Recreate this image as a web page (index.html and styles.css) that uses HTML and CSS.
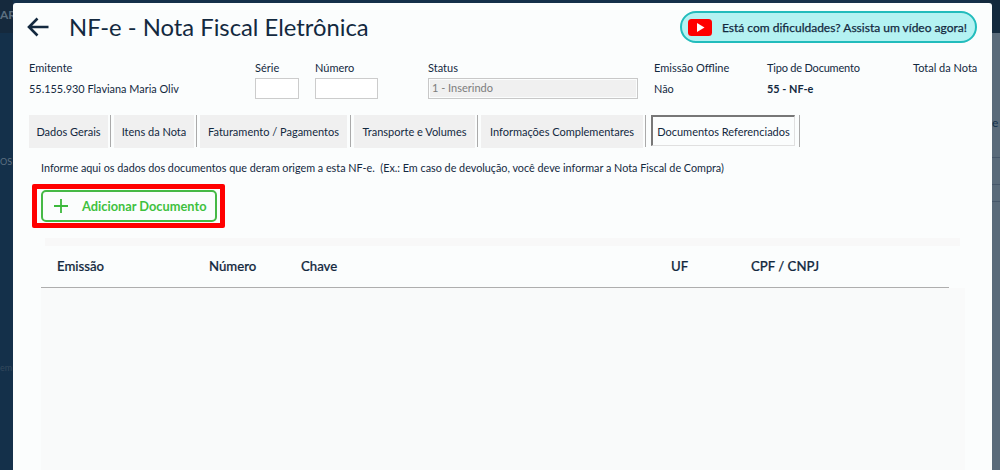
FILE: index.html
```html
<!DOCTYPE html>
<html lang="pt-BR">
<head>
<meta charset="utf-8">
<title>NF-e</title>
<link rel="stylesheet" href="styles.css">
</head>
<body>
<div class="backdrop-left">
  <span class="bg-text bg-ar">AR</span>
  <span class="bg-text bg-os">OS</span>
  <span class="bg-text bg-em">em</span>
</div>
<div class="backdrop-right">
  <span class="bg-text bg-e">e</span>
  <i class="bg-line l1"></i><i class="bg-line l2"></i><i class="bg-line l3"></i>
</div>
<main class="modal">
  <header class="top">
    <div class="title-wrap">
      <svg class="back" width="22" height="20" viewBox="0 0 22 20"><path d="M21.500 10H2.500M10.500 1.500L2 10l8.500 8.500" fill="none" stroke="#13293f" stroke-width="2.600"/></svg>
      <h1>NF-e - Nota Fiscal Eletrônica</h1>
    </div>
    <a class="video">
      <svg width="24" height="17" viewBox="0 0 24 17"><rect width="24" height="17" rx="3.500" fill="#f00"/><path d="M9 4v9l7.500-4.500z" fill="#fff"/></svg>
      <span>Está com dificuldades? Assista um vídeo agora!</span>
    </a>
  </header>

  <section class="fields">
    <div class="f f-emit"><label>Emitente</label><div class="val">55.155.930 Flaviana Maria Oliv</div></div>
    <div class="f f-serie"><label>Série</label><div class="box"></div></div>
    <div class="f f-num"><label>Número</label><div class="box"></div></div>
    <div class="f f-status"><label>Status</label><div class="box disabled">1 - Inserindo</div></div>
    <div class="f f-off"><label>Emissão Offline</label><div class="val">Não</div></div>
    <div class="f f-tipo"><label>Tipo de Documento</label><div class="val">55 - NF-e</div></div>
    <div class="f f-total"><label>Total da Nota</label></div>
  </section>

  <nav class="tabs">
    <a class="tab t1">Dados Gerais</a>
    <a class="tab t2">Itens da Nota</a>
    <a class="tab t3">Faturamento / Pagamentos</a>
    <a class="tab t4">Transporte e Volumes</a>
    <a class="tab t5">Informações Complementares</a>
    <a class="tab active">Documentos Referenciados</a>
  </nav>

  <p class="hint">Informe aqui os dados dos documentos que deram origem a esta NF-e.&nbsp; (Ex.: Em caso de devolução, você deve informar a Nota Fiscal de Compra)</p>

  <div class="highlight">
    <button class="add">
      <svg width="16" height="16" viewBox="0 0 16 16"><path d="M8 1v14M1 8h14" stroke="#3cb93c" stroke-width="1.800" fill="none"/></svg>
      <span>Adicionar Documento</span>
    </button>
  </div>

  <section class="grid">
    <div class="grid-top"></div>
    <div class="grid-head">
      <span class="c-em">Emissão</span>
      <span class="c-num">Número</span>
      <span class="c-ch">Chave</span>
      <span class="c-uf">UF</span>
      <span class="c-cpf">CPF / CNPJ</span>
    </div>
    <div class="grid-body"></div>
  </section>
</main>
</body>
</html>
```

FILE: styles.css
```css
* { box-sizing: border-box; }
html, body { margin: 0; height: 470px; overflow: hidden; }
body {
  width: 1000px;
  background: #14304a;
  font-family: Lato, "Liberation Sans", sans-serif;
  color: #13293f;
  position: relative;
}
.backdrop-left {
  position: absolute; left: 0; top: 0; width: 13px; height: 470px;
  background: linear-gradient(#15293d 0, #15293d 33px, #14304a 33px);
  overflow: hidden;
}
.backdrop-right {
  position: absolute; right: 0; top: 0; width: 20px; height: 470px;
  background: linear-gradient(#13293d 0, #13293d 33px, #5a6b7a 33px);
  overflow: hidden;
}
.bg-text { position: absolute; font-size: 12px; color: #5c6f80; }
.bg-ar { left: 0; top: 7px; font-weight: 700; }
.bg-os { left: 0; top: 156px; font-size: 9px; }
.bg-em { left: 0; top: 362px; font-size: 9px; color: #33485c; }
.bg-e { left: 12px; top: 115px; font-size: 12px; color: #14304a; }
.bg-line { position: absolute; left: 8px; right: 0; height: 1px; background: #46576a; }
.l1 { top: 157px; } .l2 { top: 184px; } .l3 { top: 201px; }

.modal {
  position: absolute; left: 13px; top: 3px; width: 979px; height: 467px;
  background: #fbfdfd;
  border-radius: 3px 3px 0 0;
  padding: 0 0 0 16px;
}
.top { display: flex; justify-content: space-between; align-items: center; height: 32px; margin-top: 8px; padding-right: 15px; }
.title-wrap { display: flex; align-items: center; gap: 20px; margin-left: -2px; }
.back { flex: none; }
h1 { margin: 0; font-size: 23.800px; font-weight: 400; color: #13293f; line-height: 32px; }
.video {
  display: flex; align-items: center; gap: 10px; flex: none; width: 297px; height: 32px;
  padding-left: 6px;
  background: #b4f2f2; border: 2px solid #22bcbc; border-radius: 16px;
  font-size: 12px; color: #13293f; white-space: nowrap;
}
.video svg { flex: none; }
.video span { -webkit-text-stroke: .25px #13293f; }

.fields { display: flex; height: 44px; margin-top: 18px; font-size: 11px; }
.f { display: flex; flex-direction: column; flex: none; }
.f label { line-height: 14px; height: 14px; white-space: nowrap; }
.val { margin-top: 7px; line-height: 14px; white-space: nowrap; font-size: 10.900px; }
.f-emit { width: 226px; }
.f-serie { width: 60px; }
.f-num { width: 113px; }
.f-status { width: 226px; }
.f-off { width: 113px; }
.f-tipo { width: 146px; }
.f-tipo label { letter-spacing: -.2px; }
.f-total { width: 70px; }
.f-tipo .val { font-weight: 700; }
.box { height: 21px; margin-top: 3px; background: #fff; border: 1px solid #ccc; }
.f-serie .box { width: 44px; }
.f-num .box { width: 63px; }
.f-status .box { width: 210px; }
.box.disabled {
  background: #f0f0f0; border: 1px solid #c8c8c8; box-shadow: inset 0 0 0 1px #fbfdfd;
  font-size: 11px; line-height: 18px; padding-left: 3px; color: #7d7d7d;
}

.tabs { display: flex; margin-top: 10px; height: 35px; font-size: 11px; }
.tab {
  display: flex; align-items: center; justify-content: center; flex: none;
  height: 33px; background: #f0f0f0; color: #13293f; white-space: nowrap;
  position: relative; margin-right: 6px;
}
.tab::after { content: ""; position: absolute; right: -3px; top: 0; height: 32px; width: 1px; background: #aaa; }
.t1 { width: 79px; }
.t2 { width: 80px; }
.t3 { width: 147px; margin-right: 7px; }
.t3::after { right: -4px; }
.t4 { width: 121px; }
.t5 { width: 162px; margin-right: 8px; }
.tab.active {
  width: 144px; height: 31px; margin-right: 0; background: #fbfdfd;
  border: 1px solid #e0e0e0; border-top: 2px solid #777; border-left: 2px solid #777;
}
.tab.active::after { right: -6px; top: -2px; }

.hint { margin: 10px 0 0 12px; font-size: 10.800px; line-height: 15px; white-space: nowrap; height: 15px; }

.highlight {
  width: 193px; height: 44px; margin: 9px 0 0 3px; padding: 6px 9px;
  background: #fbfdfd; box-shadow: inset 0 0 0 5px #f00; border-radius: 2px;
}
.add {
  display: flex; align-items: center; gap: 13px; width: 176px; height: 32px; padding: 0 0 0 10px;
  background: #fbfdfd; border: 2px solid #46b946; border-radius: 5px;
  color: #3fc13f; font: 700 12.800px Lato, "Liberation Sans", sans-serif; white-space: nowrap;
}
.add svg { flex: none; }

.grid { margin: 10px 0 0 12px; width: 924px; }
.grid-top { height: 8px; width: 915px; margin-left: 4px; background: #f8f8f8; }
.grid-head { position: relative; height: 42px; width: 908px; border-bottom: 1px solid #aeaeae; font-size: 13.200px; background: #fbfdfd; }
.grid-head span { position: absolute; top: 12px; line-height: 16px; font-weight: 500; -webkit-text-stroke: .2px #13293f; }
.c-em { left: 16px; } .c-num { left: 168px; } .c-ch { left: 260px; } .c-uf { left: 630px; } .c-cpf { left: 710px; }
.grid-body { height: 190px; background: #f9fafa; }
```
